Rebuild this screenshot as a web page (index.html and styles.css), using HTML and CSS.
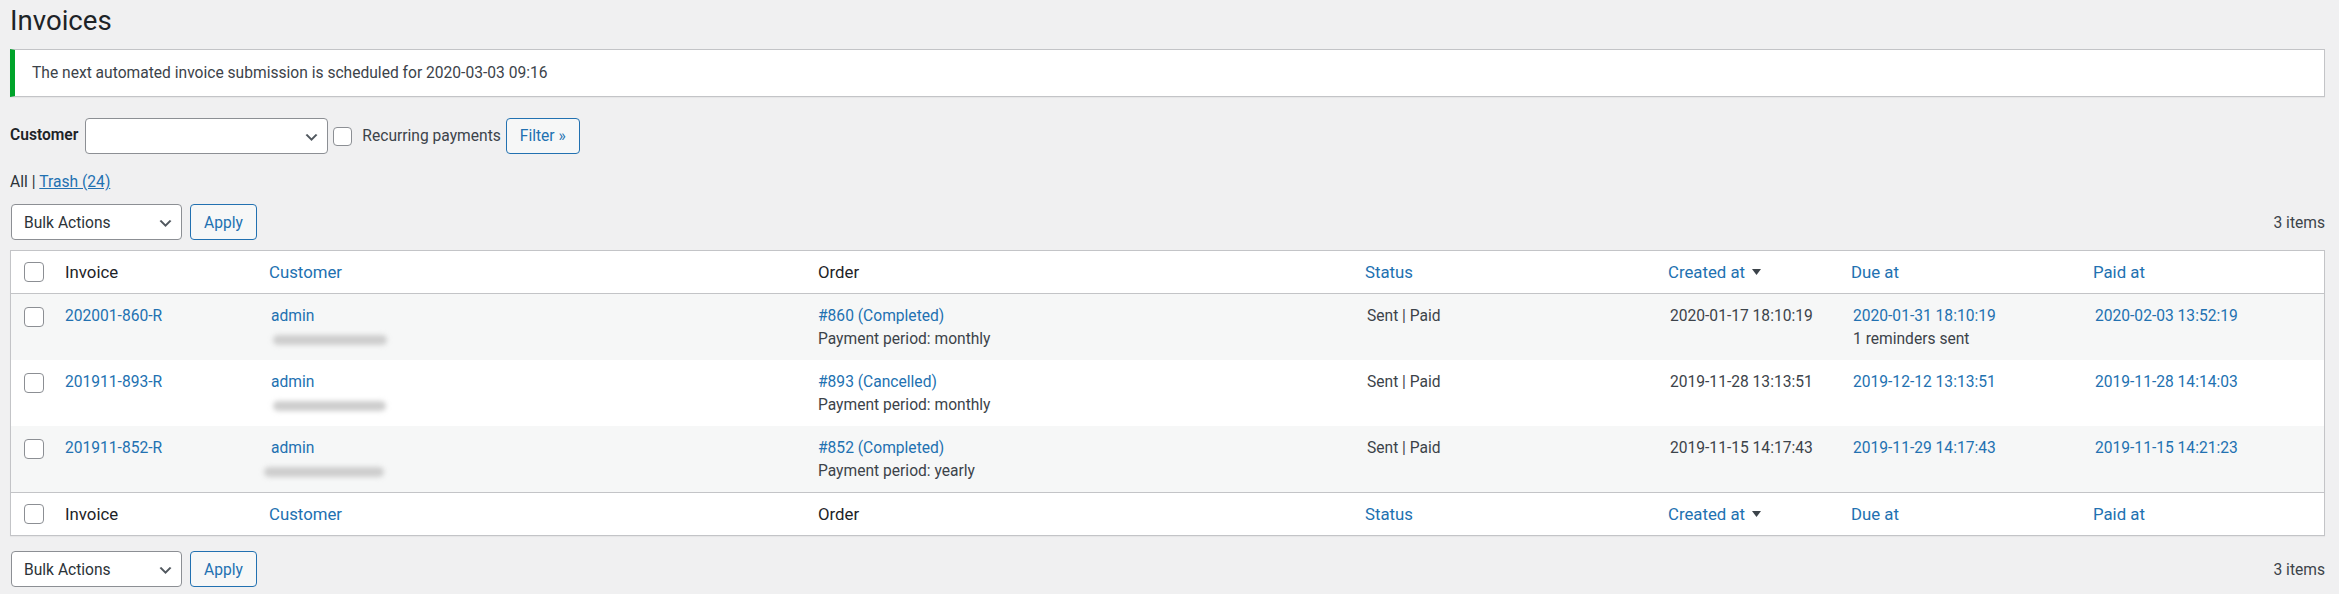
FILE: index.html
```html
<!DOCTYPE html>
<html lang="en">
<head>
<meta charset="utf-8">
<title>Invoices</title>
<link rel="stylesheet" href="styles.css">
</head>
<body>
<div class="wrap">
  <h1 class="page-title">Invoices</h1>

  <div class="notice">
    <p>The next automated invoice submission is scheduled for 2020-03-03 09:16</p>
  </div>

  <form class="filters">
    <label class="filter-label">Customer</label>
    <div class="select select-customer">
      <span class="select-value"></span>
      <svg class="chev" width="17" height="17" viewBox="0 0 20 20"><path d="M5 6l5 5 5-5 2 1-7 7-7-7 2-1z"/></svg>
    </div>
    <input type="checkbox" class="cb cb-filter">
    <span class="filter-text">Recurring payments</span>
    <button type="button" class="btn">Filter »</button>
  </form>

  <ul class="subsubsub">
    <li class="current">All <span class="sep">|</span>&nbsp;</li>
    <li><a href="#">Trash (24)</a></li>
  </ul>

  <div class="tablenav top">
    <div class="bulk">
      <div class="select select-bulk">
        <span class="select-value">Bulk Actions</span>
        <svg class="chev" width="17" height="17" viewBox="0 0 20 20"><path d="M5 6l5 5 5-5 2 1-7 7-7-7 2-1z"/></svg>
      </div>
      <button type="button" class="btn">Apply</button>
    </div>
    <div class="count">3 items</div>
  </div>

  <table class="list">
    <thead>
      <tr>
        <th class="check-column col-cb"><input type="checkbox" class="cb"></th>
        <th class="col-invoice">Invoice</th>
        <th class="col-customer sortable"><a href="#">Customer</a></th>
        <th class="col-order">Order</th>
        <th class="col-status sortable"><a href="#">Status</a></th>
        <th class="col-created sortable"><a href="#">Created at</a><svg class="sort-ind" width="9" height="6" viewBox="0 0 9 6"><path d="M0 0h9L4.5 6z"/></svg></th>
        <th class="col-due sortable"><a href="#">Due at</a></th>
        <th class="col-paid sortable"><a href="#">Paid at</a></th>
      </tr>
    </thead>
    <tbody>
      <tr>
        <td class="check-column"><input type="checkbox" class="cb"></td>
        <td><a href="#">202001-860-R</a></td>
        <td><a href="#">admin</a><div class="blur-line"><span class="blur"></span></div></td>
        <td><a href="#">#860 (Completed)</a><br>Payment period: monthly</td>
        <td>Sent | Paid</td>
        <td>2020-01-17 18:10:19</td>
        <td><a href="#">2020-01-31 18:10:19</a><br>1 reminders sent</td>
        <td><a href="#">2020-02-03 13:52:19</a></td>
      </tr>
      <tr>
        <td class="check-column"><input type="checkbox" class="cb"></td>
        <td><a href="#">201911-893-R</a></td>
        <td><a href="#">admin</a><div class="blur-line"><span class="blur blur-2"></span></div></td>
        <td><a href="#">#893 (Cancelled)</a><br>Payment period: monthly</td>
        <td>Sent | Paid</td>
        <td>2019-11-28 13:13:51</td>
        <td><a href="#">2019-12-12 13:13:51</a></td>
        <td><a href="#">2019-11-28 14:14:03</a></td>
      </tr>
      <tr>
        <td class="check-column"><input type="checkbox" class="cb"></td>
        <td><a href="#">201911-852-R</a></td>
        <td><a href="#">admin</a><div class="blur-line"><span class="blur blur-3"></span></div></td>
        <td><a href="#">#852 (Completed)</a><br>Payment period: yearly</td>
        <td>Sent | Paid</td>
        <td>2019-11-15 14:17:43</td>
        <td><a href="#">2019-11-29 14:17:43</a></td>
        <td><a href="#">2019-11-15 14:21:23</a></td>
      </tr>
    </tbody>
    <tfoot>
      <tr>
        <th class="check-column"><input type="checkbox" class="cb"></th>
        <th>Invoice</th>
        <th class="sortable"><a href="#">Customer</a></th>
        <th>Order</th>
        <th class="sortable"><a href="#">Status</a></th>
        <th class="sortable"><a href="#">Created at</a><svg class="sort-ind" width="9" height="6" viewBox="0 0 9 6"><path d="M0 0h9L4.5 6z"/></svg></th>
        <th class="sortable"><a href="#">Due at</a></th>
        <th class="sortable"><a href="#">Paid at</a></th>
      </tr>
    </tfoot>
  </table>

  <div class="tablenav bottom">
    <div class="bulk">
      <div class="select select-bulk">
        <span class="select-value">Bulk Actions</span>
        <svg class="chev" width="17" height="17" viewBox="0 0 20 20"><path d="M5 6l5 5 5-5 2 1-7 7-7-7 2-1z"/></svg>
      </div>
      <button type="button" class="btn">Apply</button>
    </div>
    <div class="count">3 items</div>
  </div>
</div>
</body>
</html>
```

FILE: styles.css
```css
* { box-sizing: border-box; }

body {
  margin: 0;
  background: #f0f0f1;
  font-family: Roboto, "Liberation Sans", Arial, sans-serif;
  font-size: 15.6px;
  line-height: 23.4px;
  color: #3c434a;
}

a { color: #2271b1; text-decoration: none; }

.wrap { padding: 0 14px 0 10px; }

.page-title {
  margin: 0;
  padding-top: 3px;
  font-size: 27.6px;
  line-height: 36px;
  font-weight: 400;
  color: #1d2327;
}

.notice {
  margin-top: 10px;
  height: 48px;
  display: flex;
  align-items: center;
  padding: 1px 0 0 17px;
  background: #fff;
  border: 1px solid #c3c4c7;
  border-left: 5px solid #00a32a;
  box-shadow: 0 1px 1px rgba(0,0,0,.04);
}
.notice p { margin: 0; }

.filters {
  display: flex;
  align-items: center;
  height: 36px;
  margin: 21px 0 0;
}
.filter-label {
  font-weight: 600;
  color: #1d2327;
  margin-right: 7px;
}

.select {
  height: 36px;
  display: flex;
  align-items: center;
  justify-content: space-between;
  padding: 2px 7px 0 12px;
  background: #fff;
  border: 1px solid #8c8f94;
  border-radius: 4px;
  color: #2c3338;
}
.chev { fill: #50575e; flex: none; }
.select-customer { width: 243px; margin-right: 5px; }
.select-bulk { width: 171px; margin-left: 1px; }

.cb {
  appearance: none;
  -webkit-appearance: none;
  display: block;
  margin: 0;
  width: 20px;
  height: 20px;
  background: #fff;
  border: 1px solid #8c8f94;
  border-radius: 4px;
}
.cb-filter { width: 19px; height: 19px; margin-right: 10px; }
.filter-text { margin-right: 5px; padding-top: 2px; }

.btn {
  height: 36px;
  padding: 2px 13px 0;
  font: inherit;
  color: #2271b1;
  background: #f6f7f7;
  border: 1px solid #2271b1;
  border-radius: 4px;
}

.subsubsub {
  list-style: none;
  margin: 17px 0 0;
  padding: 0;
  display: flex;
  color: #2c3338;
}
.subsubsub a { text-decoration: underline; }

.tablenav {
  display: flex;
  justify-content: space-between;
  align-items: center;
  height: 36px;
  margin-top: 10px;
}
.tablenav.bottom { margin-top: 15px; }
.bulk { display: flex; gap: 8px; }
.count { color: #3c434a; padding-top: 2px; }

.list {
  width: 100%;
  margin-top: 10px;
  table-layout: fixed;
  border-collapse: separate;
  border-spacing: 0;
  background: #fff;
  border: 1px solid #c3c4c7;
  box-shadow: 0 1px 1px rgba(0,0,0,.04);
}

.list th, .list td {
  text-align: left;
  font-weight: 400;
  vertical-align: top;
  padding: 10.2px 12px 9px;
}

.list thead th, .list tfoot th {
  font-size: 16.8px;
  line-height: 23.4px;
  padding: 9.6px 12px 9px;
  vertical-align: middle;
  color: #1d2327;
}
.list thead th { border-bottom: 1px solid #c3c4c7; }
.list tfoot th { border-top: 1px solid #c3c4c7; }
.list th.sortable { padding-left: 10px; }

.list .check-column { padding: 0 0 0 13px; }
.list td.check-column { padding-top: 13px; }

.col-cb { width: 42px; }
.col-invoice { width: 206px; }
.col-customer { width: 547px; }
.col-order { width: 549px; }
.col-status { width: 303px; }
.col-created { width: 183px; }
.col-due { width: 242px; }

.sort-ind {
  fill: #3c434a;
  margin-left: 7px;
  vertical-align: 3px;
}

.list tbody tr:nth-child(odd) { background: #f6f7f7; }

.blur-line {
  height: 23.4px;
  display: flex;
  align-items: center;
}
.blur {
  display: block;
  width: 114px;
  height: 10px;
  margin-left: 2px;
  border-radius: 5px;
  background: #cdcdcd;
  filter: blur(2.5px);
}
.blur-2 { width: 113px; }
.blur-3 { width: 120px; margin-left: -7px; }
```
